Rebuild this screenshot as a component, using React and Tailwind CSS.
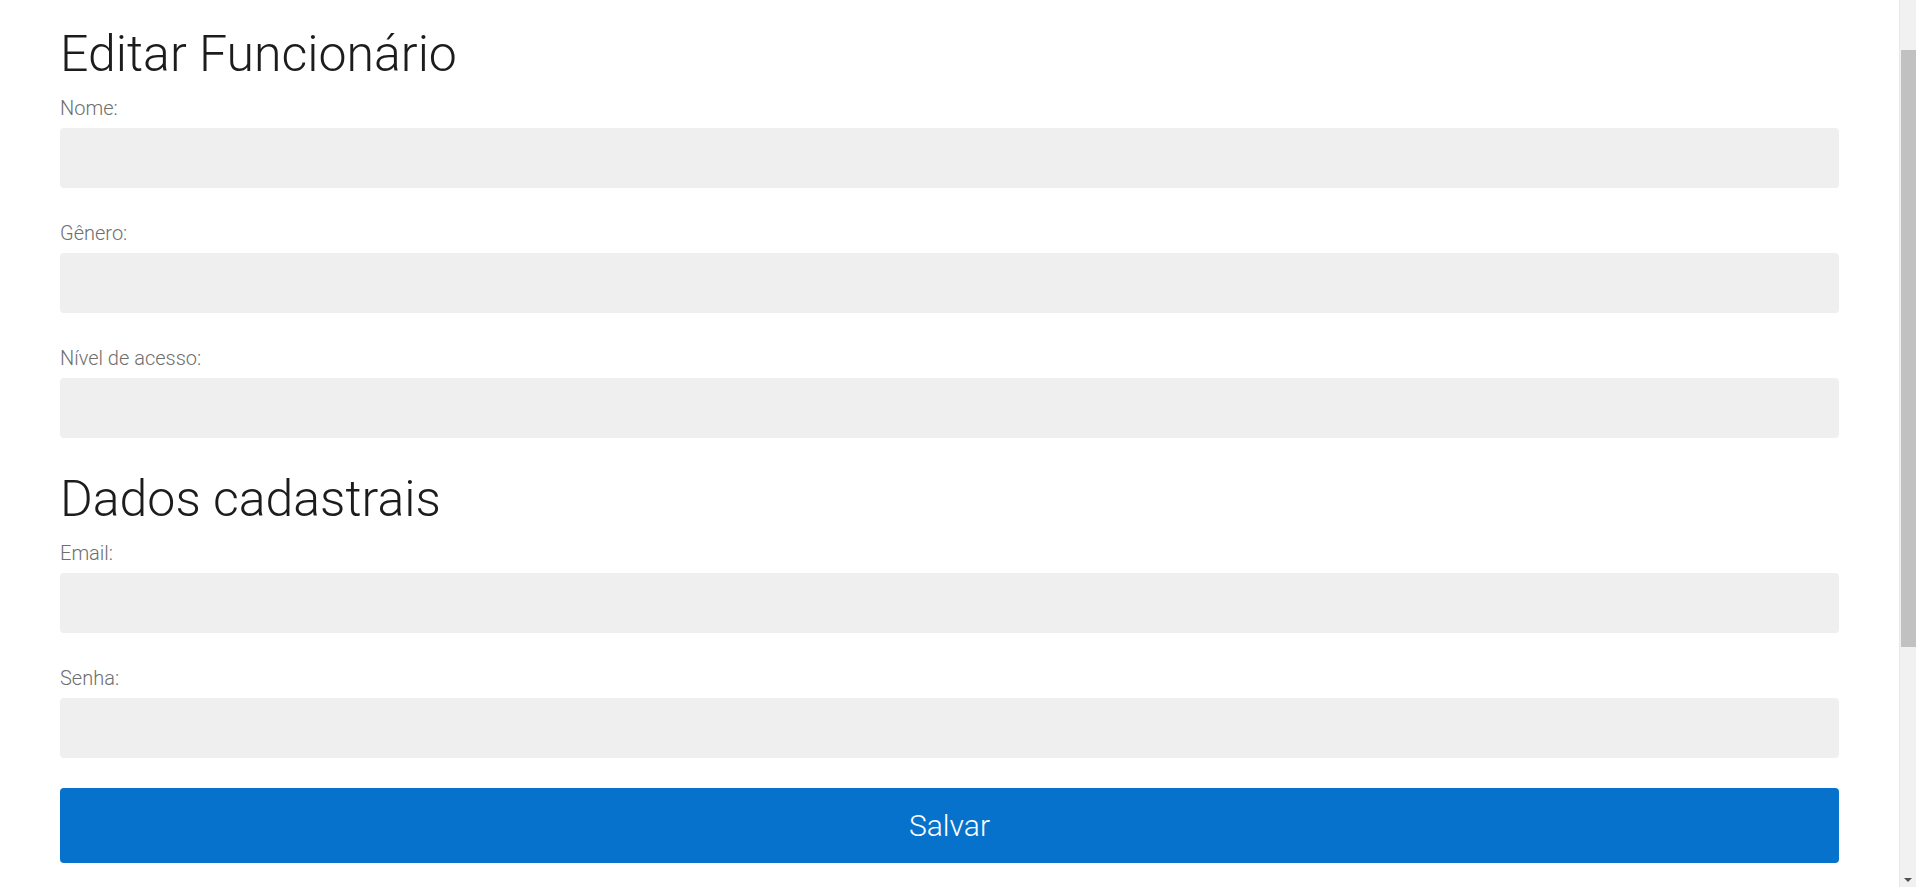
import { useState } from 'react';

const fields = [
  { id: 'nome', label: 'Nome:', type: 'text' },
  { id: 'genero', label: 'Gênero:', type: 'text' },
  { id: 'nivel', label: 'Nível de acesso:', type: 'text' },
];

const cadastro = [
  { id: 'email', label: 'Email:', type: 'email' },
  { id: 'senha', label: 'Senha:', type: 'password' },
];

export default function App() {
  const [form, setForm] = useState({});

  const update = (id) => (e) => setForm({ ...form, [id]: e.target.value });

  return (
    <div className="flex h-screen overflow-hidden bg-white font-['Roboto','Liberation_Sans',sans-serif] font-light">
      <main className="flex-1 px-[60px] pt-[26px]">
        <h1 className="mb-[14px] text-[50px] leading-[56px] font-light text-[#1c1c1c]">Editar Funcionário</h1>

        {fields.map(f => (
          <Field key={f.id} {...f} value={form[f.id] || ''} onChange={update(f.id)} />
        ))}

        <h2 className="mb-[14px] text-[50px] leading-[56px] font-light text-[#1c1c1c]">Dados cadastrais</h2>

        {cadastro.map((f, i) => (
          <Field
            key={f.id}
            {...f}
            last={i === cadastro.length - 1}
            value={form[f.id] || ''}
            onChange={update(f.id)}
          />
        ))}

        <button className="flex h-[75px] w-full items-center justify-center rounded-[4px] bg-[#0772cb] text-[30px] font-light text-white">
          Salvar
        </button>
      </main>

      {/* page scrollbar */}
      <aside className="relative w-[17px] shrink-0 border-l border-[#e8e8e8] bg-[#f1f1f1]">
        <div className="absolute top-[50px] right-0 left-[1px] h-[597px] bg-[#c1c1c1]" />
        <div className="absolute bottom-[5px] left-1/2 h-0 w-0 -translate-x-1/2 border-t-[4px] border-r-[4px] border-l-[4px] border-t-[#505050] border-r-transparent border-l-transparent" />
      </aside>
    </div>
  );
}

function Field({ id, label, type, value, onChange, last }) {
  return (
    <div className={last ? 'mb-[30px]' : 'mb-[33px]'}>
      <label htmlFor={id} className="mb-2 block text-[20px] leading-[24px] text-[#6e6e6e]">{label}</label>
      <input
        id={id}
        type={type}
        value={value}
        onChange={onChange}
        className="block h-[60px] w-full rounded-[4px] bg-[#efefef] px-4 text-[19px] text-[#333] outline-none"
      />
    </div>
  );
}
